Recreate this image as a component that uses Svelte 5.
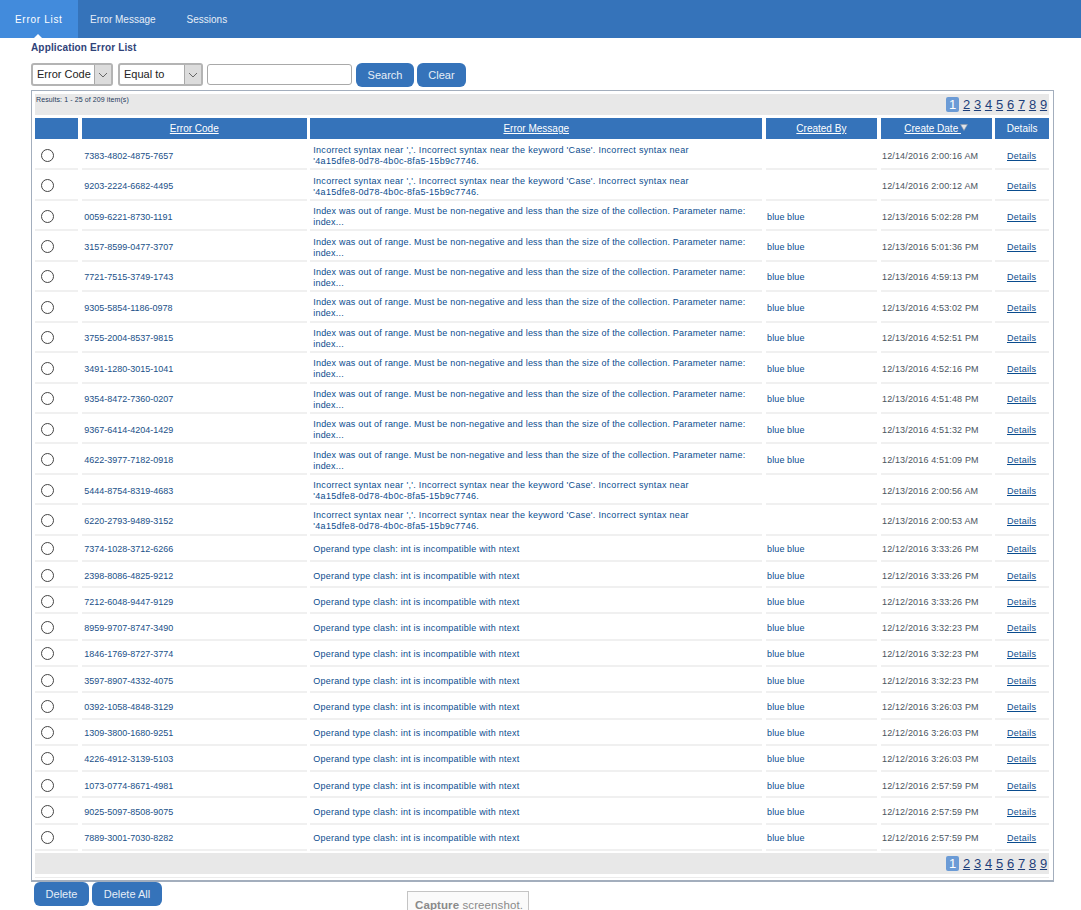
<script>
    const tabs = ['Error List', 'Error Message', 'Sessions'];
    const pages = [1, 2, 3, 4, 5, 6, 7, 8, 9];

    const syntaxMsg = { kind: 'syntax', lines: ["Incorrect syntax near ','. Incorrect syntax near the keyword 'Case'. Incorrect syntax near", "'4a15dfe8-0d78-4b0c-8fa5-15b9c7746."] };
    const indexMsg = { kind: 'index', lines: ['Index was out of range. Must be non-negative and less than the size of the collection. Parameter name:', 'index...'] };
    const clashMsg = { kind: 'clash', lines: ['Operand type clash: int is incompatible with ntext'] };

    const rows = [
        ['7383-4802-4875-7657', syntaxMsg, '', '12/14/2016 2:00:16 AM'],
        ['9203-2224-6682-4495', syntaxMsg, '', '12/14/2016 2:00:12 AM'],
        ['0059-6221-8730-1191', indexMsg, 'blue blue', '12/13/2016 5:02:28 PM'],
        ['3157-8599-0477-3707', indexMsg, 'blue blue', '12/13/2016 5:01:36 PM'],
        ['7721-7515-3749-1743', indexMsg, 'blue blue', '12/13/2016 4:59:13 PM'],
        ['9305-5854-1186-0978', indexMsg, 'blue blue', '12/13/2016 4:53:02 PM'],
        ['3755-2004-8537-9815', indexMsg, 'blue blue', '12/13/2016 4:52:51 PM'],
        ['3491-1280-3015-1041', indexMsg, 'blue blue', '12/13/2016 4:52:16 PM'],
        ['9354-8472-7360-0207', indexMsg, 'blue blue', '12/13/2016 4:51:48 PM'],
        ['9367-6414-4204-1429', indexMsg, 'blue blue', '12/13/2016 4:51:32 PM'],
        ['4622-3977-7182-0918', indexMsg, 'blue blue', '12/13/2016 4:51:09 PM'],
        ['5444-8754-8319-4683', syntaxMsg, '', '12/13/2016 2:00:56 AM'],
        ['6220-2793-9489-3152', syntaxMsg, '', '12/13/2016 2:00:53 AM'],
        ['7374-1028-3712-6266', clashMsg, 'blue blue', '12/12/2016 3:33:26 PM'],
        ['2398-8086-4825-9212', clashMsg, 'blue blue', '12/12/2016 3:33:26 PM'],
        ['7212-6048-9447-9129', clashMsg, 'blue blue', '12/12/2016 3:33:26 PM'],
        ['8959-9707-8747-3490', clashMsg, 'blue blue', '12/12/2016 3:32:23 PM'],
        ['1846-1769-8727-3774', clashMsg, 'blue blue', '12/12/2016 3:32:23 PM'],
        ['3597-8907-4332-4075', clashMsg, 'blue blue', '12/12/2016 3:32:23 PM'],
        ['0392-1058-4848-3129', clashMsg, 'blue blue', '12/12/2016 3:26:03 PM'],
        ['1309-3800-1680-9251', clashMsg, 'blue blue', '12/12/2016 3:26:03 PM'],
        ['4226-4912-3139-5103', clashMsg, 'blue blue', '12/12/2016 3:26:03 PM'],
        ['1073-0774-8671-4981', clashMsg, 'blue blue', '12/12/2016 2:57:59 PM'],
        ['9025-5097-8508-9075', clashMsg, 'blue blue', '12/12/2016 2:57:59 PM'],
        ['7889-3001-7030-8282', clashMsg, 'blue blue', '12/12/2016 2:57:59 PM'],
    ];
</script>

{#snippet pager()}
    <div class="pager">
        {#each pages as p}
            {#if p === 1}
                <span class="page current">{p}</span>
            {:else}
                <a class="page" href="#p">{p}</a>
            {/if}
        {/each}
    </div>
{/snippet}

{#snippet arrow()}
    <i class="arrow"><svg viewBox="0 0 10 6" width="10" height="6"><path d="M1 1l4 4 4-4" fill="none" stroke="#666" stroke-width="1"/></svg></i>
{/snippet}

<div class="page-wrap">
    <nav class="tabs">
        {#each tabs as tab, i}
            <a class="tab" class:active={i === 0} href="#t">{tab}</a>
        {/each}
    </nav>

    <main class="content">
        <h1>Application Error List</h1>

        <div class="filters">
            <div class="select code-select"><span>Error Code</span>{@render arrow()}</div>
            <div class="select op-select"><span>Equal to</span>{@render arrow()}</div>
            <input class="search-input" type="text" />
            <button class="btn search">Search</button>
            <button class="btn clear">Clear</button>
        </div>

        <section class="grid-box">
            <div class="bar top-bar">
                <span class="results">Results: 1 - 25 of 209 item(s)</span>
                {@render pager()}
            </div>

            <div class="row head">
                <div></div>
                <div><a href="#s">Error Code</a></div>
                <div><a href="#s">Error Message</a></div>
                <div><a href="#s">Created By</a></div>
                <div><a href="#s">Create Date&nbsp;</a><svg class="sort" viewBox="0 0 8 7" width="8" height="7"><path d="M.5.5h7L4 6.5z" fill="#dfe3e8" stroke="#8b97a6" stroke-width=".6"/></svg></div>
                <div>Details</div>
            </div>

            <div class="body">
                {#each rows as [code, msg, by, date]}
                    <div class="row item" class:single={msg.lines.length === 1}>
                        <div class="radio-cell"><span class="radio"></span></div>
                        <div class="code">{code}</div>
                        <div class="msg {msg.kind}">
                            {#each msg.lines as line}<div>{line}</div>{/each}
                        </div>
                        <div class="by">{by}</div>
                        <div class="date">{date}</div>
                        <div class="details"><a href="#d">Details</a></div>
                    </div>
                {/each}
            </div>

            <div class="bar bottom-bar">
                {@render pager()}
            </div>
            <div class="foot-rule"></div>
        </section>

        <div class="actions">
            <button class="btn del">Delete</button>
            <button class="btn del-all">Delete All</button>
        </div>
    </main>

    <div class="capture"><b>Capture</b> screenshot.</div>
</div>

<style>
    :global(body) {
        margin: 0;
        background: #fff;
    }

    .page-wrap {
        position: relative;
        height: 910px;
        overflow: hidden;
        font-family: "Liberation Sans", Arial, sans-serif;
    }

    .tabs {
        display: flex;
        height: 38px;
        background: #3573ba;
    }

    .tab {
        display: flex;
        align-items: center;
        padding: 0 19px 0 12px;
        font-size: 10px;
        color: #e6eef7;
        text-decoration: none;
        position: relative;
    }

    .tab.active {
        width: 78px;
        box-sizing: border-box;
        padding: 0 0 0 15px;
        background: #428bdc;
        color: #fff;
        letter-spacing: 0.7px;
    }

    .tab.active::after {
        content: '';
        position: absolute;
        left: 34px;
        bottom: 0;
        border: 4px solid transparent;
        border-top: 0;
        border-bottom-color: #fff;
    }

    .content {
        padding: 0 27px 0 31px;
    }

    h1 {
        margin: 0;
        padding-top: 4px;
        font-size: 10px;
        line-height: 12px;
        font-weight: bold;
        letter-spacing: 0.15px;
        color: #2f4379;
    }

    .filters {
        display: flex;
        align-items: center;
        gap: 4px;
        margin-top: 8px;
        height: 25px;
    }

    .select {
        box-sizing: border-box;
        display: flex;
        height: 23px;
        border: 2px solid #b4b4b4;
        border-radius: 3px;
        font-size: 11px;
        color: #222;
        background: #fff;
        align-items: stretch;
    }

    .select span {
        flex: 1;
        padding-left: 4px;
        line-height: 19px;
    }

    .arrow {
        display: flex;
        align-items: center;
        justify-content: center;
        width: 16px;
        background: #dcdcdc;
        border-left: 1px solid #a9a9a9;
    }

    .code-select {
        width: 82px;
        margin-right: 1px;
    }

    .op-select {
        width: 85px;
    }

    .search-input {
        box-sizing: border-box;
        width: 145px;
        height: 21px;
        margin: 0;
        padding: 0;
        border: 1px solid #a9a9a9;
        border-radius: 3px;
    }

    .btn {
        height: 24px;
        border: 0;
        border-radius: 6px;
        background: #3573ba;
        color: #e6eef7;
        font-family: inherit;
        font-size: 11px;
        padding: 0;
    }

    .search {
        width: 58px;
    }

    .clear {
        width: 49px;
        margin-left: -1px;
    }

    .grid-box {
        box-sizing: border-box;
        width: 1023px;
        height: 792px;
        margin-top: 3px;
        padding: 3px 4px 3px 3px;
        border: 1px solid #a3aebd;
        border-width: 1px 1px 2px 1px;
    }

    .bar {
        display: flex;
        justify-content: space-between;
        height: 21px;
        background: #e8e8e8;
    }

    .bottom-bar {
        justify-content: flex-end;
        margin-top: 2px;
    }

    .foot-rule {
        height: 1px;
        margin-top: 3px;
        background: #ececec;
    }

    .results {
        font-size: 7px;
        letter-spacing: 0.1px;
        color: #1f3a5c;
        padding: 2px 0 0 1px;
    }

    .pager {
        display: flex;
        align-items: center;
        margin-left: auto;
        gap: 2px;
        padding-right: 1px;
    }

    .page {
        width: 9px;
        text-align: center;
        font-size: 13px;
        line-height: 15px;
        color: #1e3f7a;
    }

    .page.current {
        width: 13px;
        margin-right: 1px;
        border-radius: 2px;
        background: #6b9bd6;
        color: #fff;
    }

    .row {
        display: grid;
        grid-template-columns: 43.3px 225.3px 452px 111.6px 111.3px 54px;
        column-gap: 3.33px;
    }

    .head {
        margin-top: 3px;
        height: 21px;
        font-size: 10px;
        color: #fff;
    }

    .head > div {
        display: flex;
        align-items: center;
        justify-content: center;
        background: #3573ba;
    }

    .head a {
        color: #fff;
    }

    .sort {
        margin: 0 0 2px -1px;
    }

    .body {
        padding-top: 1px;
    }

    .item {
        box-sizing: border-box;
        height: 30.45px;
        font-size: 9px;
        line-height: 11px;
        color: #1a5088;
    }

    .item.single {
        height: 26.27px;
    }

    .item > div {
        box-sizing: border-box;
        display: flex;
        flex-direction: column;
        justify-content: center;
        padding: 4px 0 0 3px;
        border-bottom: 2px solid #f0f0f0;
    }

    .item > .code {
        padding-left: 2.5px;
    }

    .item > .radio-cell {
        align-items: flex-start;
        padding: 2px 0 0 6px;
    }

    .radio {
        display: block;
        box-sizing: border-box;
        width: 13px;
        height: 13px;
        border: 1px solid #444;
        border-radius: 50%;
        background: #fff;
    }

    .msg, .by {
        color: #0a4c8e;
    }

    .msg.syntax {
        letter-spacing: 0.3px;
    }

    .msg.index {
        letter-spacing: 0.2px;
    }

    .msg.clash {
        letter-spacing: 0.22px;
    }

    .item > .by {
        padding-left: 1.5px;
        letter-spacing: 0.1px;
    }

    .item > .date {
        padding-left: 1.5px;
        letter-spacing: 0.15px;
        color: #4a5460;
    }

    .item > .details {
        align-items: center;
        padding: 4px 1px 0 0;
        letter-spacing: 0.25px;
    }

    .details a {
        color: #0a4c8e;
    }

    .actions {
        display: flex;
        gap: 3px;
        padding-left: 3px;
    }

    .del {
        width: 55px;
    }

    .del-all {
        width: 70px;
    }

    .capture {
        position: absolute;
        left: 407px;
        top: 891px;
        box-sizing: border-box;
        width: 122px;
        height: 30px;
        padding: 7px 0 0 7px;
        border: 1px solid #c4c4c4;
        background: #fafafa;
        font-size: 11.5px;
        letter-spacing: 0.1px;
        color: #8a8a8a;
    }
</style>
